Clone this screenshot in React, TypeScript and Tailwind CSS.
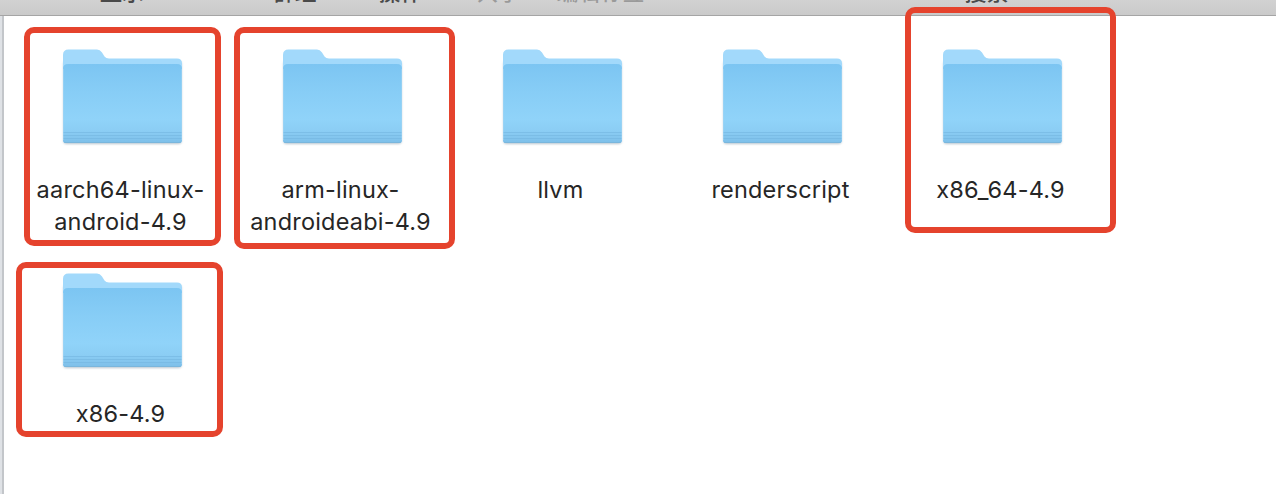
const tools = [
  { label: '显示', pad: 'ml-[100px]', tone: 'text-[#4a4a4a]' },
  { label: '群组', pad: 'ml-[128.500px]', tone: 'text-[#4a4a4a]' },
  { label: '操作', pad: 'ml-[62px]', tone: 'text-[#4a4a4a]' },
  { label: '共享', pad: 'ml-[54px]', tone: 'text-[#9a9a9a]' },
  { label: '编辑标签', pad: 'ml-[36px]', tone: 'text-[#9a9a9a]' },
  { label: '搜索', pad: 'ml-[320px]', tone: 'text-[#4a4a4a]' },
];

const folders = [
  { lines: ['aarch64-linux-', 'android-4.9'], frame: 'left-[21px] top-[11px] w-[197px] h-[219px]' },
  { lines: ['arm-linux-', 'androideabi-4.9'], frame: 'left-[11px] top-[11px] w-[221px] h-[222px]' },
  { lines: ['llvm'], frame: '' },
  { lines: ['renderscript'], frame: '' },
  { lines: ['x86_64-4.9'], frame: 'left-[22px] top-[-9px] w-[211px] h-[226px]' },
  { lines: ['x86-4.9'], frame: 'left-[13px] top-[22px] w-[207px] h-[175px]' },
];

function FolderIcon() {
  return (
    <svg className="mt-[29px] ml-[3px] h-[106px] w-[127px] shrink-0" viewBox="-4 -4 127 106">
      <defs>
        <linearGradient id="front" x1="0" y1="0" x2="0" y2="1">
          <stop offset="0" stopColor="#7cc5f2" />
          <stop offset="0.35" stopColor="#87cdf6" />
          <stop offset="0.7" stopColor="#90d3f9" />
          <stop offset="0.85" stopColor="#8bcdf4" />
          <stop offset="1" stopColor="#7dbfe9" />
        </linearGradient>
        <filter id="shade" x="-5%" y="-5%" width="110%" height="115%">
          <feGaussianBlur stdDeviation="1.2" />
        </filter>
      </defs>
      <rect x="0.5" y="12" width="118" height="83" rx="3" fill="#6f8ca0" opacity="0.5" filter="url(#shade)" />
      <path d="M0 6Q0 0.500 5.500 0.500H34Q37 0.500 39 3.500L41.500 7.500Q43 9.500 46 9.500H114Q119 9.500 119 14.500V91Q119 94 116 94H3Q0 94 0 91Z" fill="#a2d9fb" />
      <path d="M0 20Q0 15 5 15H114Q119 15 119 20V91Q119 94 116 94H3Q0 94 0 91Z" fill="url(#front)" />
      <path d="M0.500 20V91M118.500 20V91" stroke="#a2d5f3" strokeWidth="1" opacity="0.6" />
      <path d="M0.500 83.500H118.500M0.500 86.500H118.500M0.500 89.500H118.500" stroke="#74b6e1" strokeWidth="1" opacity="0.6" />
      <path d="M1 93Q2 93.500 3 93.500H116Q117 93.500 118 93" fill="none" stroke="#7ab6dc" strokeWidth="1" />
    </svg>
  );
}

export default function App() {
  return (
    <div className="flex h-[494px] w-[1276px] flex-col overflow-hidden bg-white font-['Inter','Noto_Sans_CJK_SC',sans-serif]">
      <header className="flex h-4 shrink-0 items-end overflow-hidden border-b border-[#a5a5a5] bg-linear-to-b from-[#d2d2d2] to-[#cacaca] pb-[11px]">
        {tools.map((t) => (
          <span key={t.label} className={`${t.pad} ${t.tone} shrink-0 text-[22px] leading-[24px] font-medium whitespace-nowrap`}>
            {t.label}
          </span>
        ))}
      </header>
      <main className="flex min-h-0 grow">
        <div className="w-1 shrink-0 border-r-2 border-[#c3c6ca] bg-[#dfe2e6]" />
        <div className="-ml-px grid auto-rows-[224px] grid-cols-[repeat(5,220px)] content-start">
          {folders.map((f) => (
            <div key={f.lines.join('')} className="relative flex flex-col items-center pl-4">
              <FolderIcon />
              <div className="mt-[23px] -ml-px text-center text-[23.5px] leading-8 tracking-[0.2px] text-[#262626]">
                {f.lines.map((l) => (
                  <div key={l}>{l}</div>
                ))}
              </div>
              {f.frame && <div className={`absolute ${f.frame} rounded-[10px] border-[6px] border-[#e5432d]`} />}
            </div>
          ))}
        </div>
      </main>
    </div>
  );
}
